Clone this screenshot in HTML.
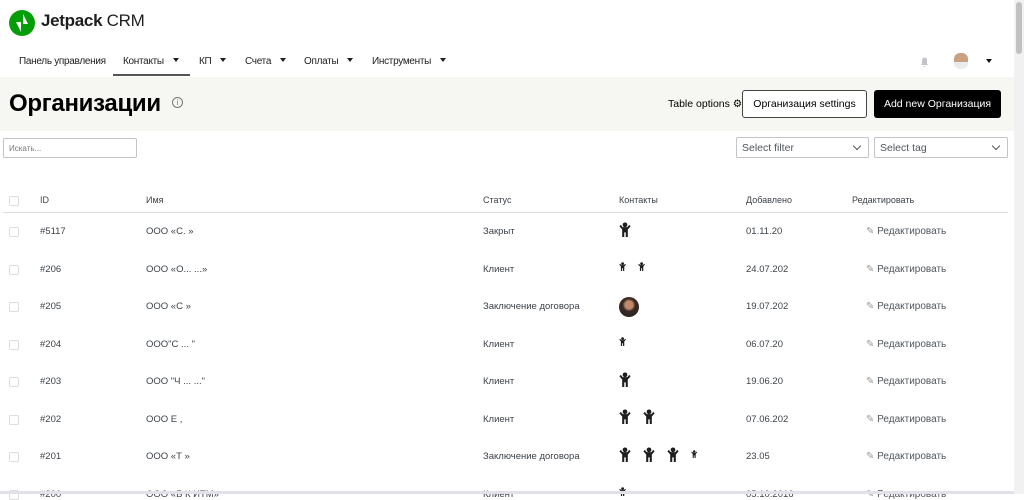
<!DOCTYPE html>
<html><head><meta charset="utf-8"><style>
*{box-sizing:border-box;margin:0;padding:0}
body{width:1024px;height:494px;overflow:hidden;background:#fff;font-family:"Liberation Sans","DejaVu Sans",sans-serif;color:#1e1e1e;position:relative}
.a{position:absolute;white-space:nowrap}
.nav{font-size:10px;letter-spacing:-0.3px;color:#1e1e1e}
.car{display:inline-block;width:0;height:0;border-left:3.5px solid transparent;border-right:3.5px solid transparent;border-top:4px solid #1e1e1e;margin-left:9px;vertical-align:2px}
.hd{font-size:9px;color:#3c434a}
.td{font-size:9.5px;color:#3c434a}
.cb{position:absolute;left:9px;width:10px;height:10px;border:1px solid #dcdcde;border-radius:2px}
.ed{font-size:10px;color:#50575e}
.sel{position:absolute;height:21px;border:1px solid #c3c4c7;border-radius:2px;font-size:10.5px;color:#50575e;padding:4px 5px}
.sel:after{content:"";position:absolute;right:8px;top:5px;width:5px;height:5px;border-right:1px solid #50575e;border-bottom:1px solid #50575e;transform:rotate(45deg)}
</style></head><body>
<svg class="a" style="left:9px;top:10px" width="26" height="26" viewBox="0 0 26 26"><circle cx="13" cy="13" r="13" fill="#069e08"/><path d="M14 4v10h5z M12 22V12H7z" fill="#fff"/></svg>
<div class="a" style="left:41px;top:11px;font-size:17px;letter-spacing:-0.3px;color:#1e1e1e"><b>Jetpack</b> CRM</div>
<div class="a nav" style="left:19px;top:56px">Панель управления</div>
<div class="a nav" style="left:123px;top:56px">Контакты<span class="car"></span></div>
<div class="a" style="left:113px;top:74px;width:77px;height:2px;background:#555"></div>
<div class="a nav" style="left:199px;top:56px">КП<span class="car"></span></div>
<div class="a nav" style="left:245px;top:56px">Счета<span class="car"></span></div>
<div class="a nav" style="left:304px;top:56px">Оплаты<span class="car"></span></div>
<div class="a nav" style="left:372px;top:56px">Инструменты<span class="car"></span></div>
<svg class="a" style="left:920px;top:57px" width="9" height="10" viewBox="0 0 9 10"><path d="M4.5 0.5C2.5 0.5 2 2 2 4v2.5L1 8h7L7 6.5V4C7 2 6.5 .5 4.5 .5zM3.5 9h2a1 1 0 0 1-2 0z" fill="#c3c4c7"/></svg>
<div class="a" style="left:954px;top:53px;width:14px;height:16px;border-radius:6px;background:linear-gradient(#c9a080 0 55%,#e8ecee 55%)"></div>
<div class="a" style="left:986px;top:59px;border-left:3px solid transparent;border-right:3px solid transparent;border-top:4px solid #111"></div>
<div class="a" style="left:0;top:77px;width:1014px;height:54px;background:#f6f7f3"></div>
<div class="a" style="left:9px;top:90px;font-size:24px;letter-spacing:-0.3px;font-weight:bold;color:#000">Организации</div>
<div class="a" style="left:172px;top:97px;width:11px;height:11px;border:1px solid #777;border-radius:50%;font-size:8px;color:#777;text-align:center;line-height:9px">i</div>
<div class="a" style="left:668px;top:98px;font-size:10.5px;color:#000">Table options ⚙</div>
<div class="a" style="left:742px;top:90px;width:125px;height:28px;border:1px solid #444;border-radius:3px;background:#fff;font-size:10.5px;text-align:center;line-height:26px;color:#000">Организация settings</div>
<div class="a" style="left:874px;top:90px;width:127px;height:28px;border-radius:3px;background:#000;font-size:10.5px;text-align:center;line-height:28px;color:#fff">Add new Организация</div>
<div class="a" style="left:3px;top:138px;width:134px;height:20px;border:1px solid #c3c4c7;border-radius:2px;font-size:8px;color:#777;padding:5px 5px">Искать...</div>
<div class="sel" style="left:736px;top:137px;width:133px">Select filter</div>
<div class="sel" style="left:874px;top:137px;width:134px">Select tag</div>
<div class="cb" style="top:196px"></div>
<div class="a hd" style="left:40px;top:195px">ID</div>
<div class="a hd" style="left:146px;top:195px">Имя</div>
<div class="a hd" style="left:483px;top:195px">Статус</div>
<div class="a hd" style="left:619px;top:195px">Контакты</div>
<div class="a hd" style="left:746px;top:195px">Добавлено</div>
<div class="a hd" style="left:852px;top:195px">Редактировать</div>
<div class="a" style="left:3px;top:212px;width:1005px;height:1px;background:#dcdcde"></div>
<svg width="0" height="0" style="position:absolute"><defs><symbol id="p" viewBox="0 0 12 16"><circle cx="6" cy="3" r="2.5"/><path d="M0 4.5l1.5-1.5 2 2.5h5l2-2.5L12 4.5 9 8v8H6.8v-5H5.2v5H3V8z"/></symbol></defs></svg>
<div id="rows"></div>
<script>
var r=[["#5117","ООО «С.     »","Закрыт",[[15]],"01.11.20"],
["#206","ООО «О...     ...»","Клиент",[[9],[9]],"24.07.202"],
["#205","ООО «С       »","Заключение договора","av","19.07.202"],
["#204","ООО\"С      ...  \"","Клиент",[[9]],"06.07.20"],
["#203","ООО \"Ч    ...   ...\"","Клиент",[[15]],"19.06.20"],
["#202","ООО Е    ,","Клиент",[[15],[15]],"07.06.202"],
["#201","ООО «Т   »","Заключение договора",[[15],[15],[15],[8]],"23.05"],
["#200","ООО «Б    К      ИТМ»","Клиент",[[9]],"05.10.2016"]];
var h="";r.forEach(function(x,i){var y=232+i*37.5;
h+='<div class="cb" style="top:'+(y-5)+'px"></div><div class="a td" style="left:40px;top:'+(y-6)+'px">'+x[0]+'</div><div class="a td" style="left:146px;top:'+(y-6)+'px">'+x[1]+'</div><div class="a td" style="left:483px;top:'+(y-6)+'px">'+x[2]+'</div><div class="a td" style="left:746px;top:'+(y-6)+'px">'+x[4]+'</div>';
if(x[3]=="av")h+='<div class="a" style="left:619px;top:'+(y-10)+'px;width:20px;height:20px;border-radius:50%;background:radial-gradient(circle at 50% 40%,#c08a6a 0 25%,#3a2a22 40%,#222 100%)"></div>';
else{var lx=619;x[3].forEach(function(s){var w=s[0]*0.8;h+='<svg class="a" style="left:'+lx+'px;top:'+(y-s[0]/2-3)+'px" width="'+w+'" height="'+s[0]+'" viewBox="0 0 12 16" fill="#1e1e1e"><use href="#p"/></svg>';lx+=w+12;});}
h+='<div class="a ed" style="left:866px;top:'+(y-6)+'px"><span style="color:#999">✎</span> Редактировать</div>';});
document.getElementById("rows").innerHTML=h;
</script>
<div class="a" style="left:0;top:491px;width:1014px;height:3px;background:#e4e0ea"></div>
<div class="a" style="left:1014px;top:0;width:10px;height:494px;background:#f1f1f1"></div>
<div class="a" style="left:1016px;top:2px;width:6px;height:52px;border-radius:3px;background:#c1c1c1"></div>
</body></html>
